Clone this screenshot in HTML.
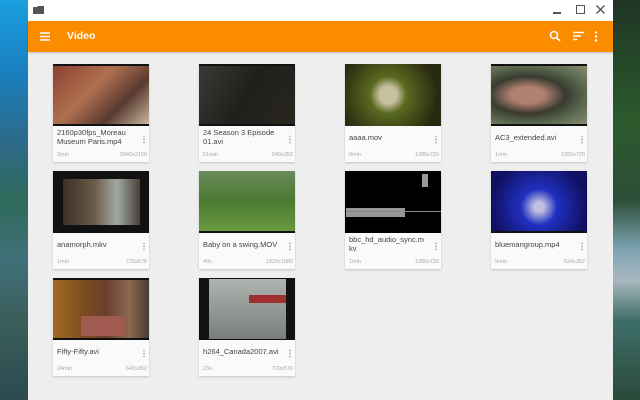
<!DOCTYPE html>
<html><head><meta charset="utf-8"><style>
*{margin:0;padding:0;box-sizing:border-box}
body{width:640px;height:400px;overflow:hidden;position:relative;font-family:"Liberation Sans",sans-serif;background:#1b3a2a}
.ldesk{position:absolute;left:0;top:0;width:28px;height:400px;background:linear-gradient(180deg,#1aa0e0 0%,#1a7fc0 18%,#2d6a8a 35%,#2f6a5a 50%,#40707a 65%,#3a5f5a 80%,#2c4a50 100%)}
.rdesk{position:absolute;left:613px;top:0;width:27px;height:400px;background:linear-gradient(180deg,#1f3524 0%,#2b5a2c 30%,#2c4f38 50%,#7aa0b0 62%,#a9b8c0 70%,#3f6f6a 80%,#2a4a3a 100%)}
.win{position:absolute;left:28px;top:0;width:585px;height:400px;background:#eeeeee}
.tb{height:21px;background:#fff;position:relative}
.bar{height:31px;background:#fb8c00;position:relative;color:#fff;box-shadow:0 1px 2px rgba(0,0,0,.2)}
.title{position:absolute;left:39px;top:9px;font-size:10.5px;font-weight:bold}
.card{position:absolute;width:96px;height:98px;background:#fafafa;box-shadow:0 1px 2px rgba(0,0,0,.18)}
.th{height:62px;background:#111;position:relative;overflow:hidden}
.nm{position:absolute;left:4px;top:65px;width:80px;font-size:7.5px;color:#444;line-height:8.5px}
.nm.one{top:70px}
.dots{position:absolute;right:4px;top:71px;width:2px;height:9px;background:radial-gradient(circle,#bbb 0.9px,transparent 1px) 0 0/2px 3px}
.m{position:absolute;top:88px;font-size:5.5px;color:#aaa}
.m.l{left:4px}.m.r{right:2px}
</style></head><body>
<div class="ldesk"></div><div class="rdesk"></div>
<div class="win">
<div class="tb">
<svg style="position:absolute;left:5px;top:5px" width="12" height="10"><path d="M0 2H4L5 1H11V9H0Z" fill="#555"/></svg>
<div style="position:absolute;left:525px;top:12px;width:8px;height:1.5px;background:#555"></div>
<div style="position:absolute;left:548px;top:5px;width:9px;height:9px;border:1.4px solid #555"></div>
<svg style="position:absolute;left:568px;top:5px" width="9" height="9"><path d="M0.5 0.5L8.5 8.5M8.5 0.5L0.5 8.5" stroke="#555" stroke-width="1.4"/></svg>
</div>
<div class="bar">
<svg style="position:absolute;left:12px;top:11px" width="10" height="9"><path d="M0 1H10M0 4.5H10M0 8H10" stroke="#fff" stroke-width="1.5"/></svg>
<div class="title">Video</div>
<svg style="position:absolute;left:521px;top:9px" width="12" height="12"><circle cx="5" cy="5" r="3.5" stroke="#fff" stroke-width="1.6" fill="none"/><path d="M7.5 7.5L11 11" stroke="#fff" stroke-width="1.8"/></svg>
<svg style="position:absolute;left:545px;top:10px" width="12" height="10"><path d="M0 1.5H11M0 5H8M0 8.5H4" stroke="#fff" stroke-width="1.5"/></svg>
<svg style="position:absolute;left:566px;top:10px" width="4" height="11"><circle cx="2" cy="1.5" r="1.2" fill="#fff"/><circle cx="2" cy="5.5" r="1.2" fill="#fff"/><circle cx="2" cy="9.5" r="1.2" fill="#fff"/></svg>
</div>
</div>

<div class="card" style="left:53px;top:64px"><div class="th" style="background:#111"><div style="position:absolute;left:0;top:2px;right:0;bottom:2px;background:linear-gradient(135deg,#8a4030,#b07050 40%,#5a3a30 70%,#c8b8a0)"></div></div><div class="nm">2160p30fps_Moreau Museum Paris.mp4</div><div class="dots"></div><div class="m l">3min</div><div class="m r">3840x2160</div></div>
<div class="card" style="left:199px;top:64px"><div class="th"><div style="position:absolute;left:0;top:2px;right:0;bottom:2px;background:linear-gradient(120deg,#3a3a36,#1f1f1c 50%,#2a2620)"></div></div><div class="nm">24 Season 3 Episode 01.avi</div><div class="dots"></div><div class="m l">51min</div><div class="m r">640x352</div></div>
<div class="card" style="left:345px;top:64px"><div class="th"><div style="position:absolute;left:0;top:0;right:0;bottom:0;background:radial-gradient(circle at 45% 50%,#c8c0a0 0 14%,#5a6a20 30%,#2a2a10 80%)"></div></div><div class="nm one">aaaa.mov</div><div class="dots"></div><div class="m l">9min</div><div class="m r">1280x720</div></div>
<div class="card" style="left:491px;top:64px"><div class="th"><div style="position:absolute;left:0;top:2px;right:0;bottom:2px;background:radial-gradient(ellipse at 38% 50%,#b08070 0 20%,#3a3a30 45%,#5a6a50 70%,#8a8a70)"></div></div><div class="nm one">AC3_extended.avi</div><div class="dots"></div><div class="m l">1min</div><div class="m r">1280x720</div></div>

<div class="card" style="left:53px;top:171px"><div class="th"><div style="position:absolute;left:10px;top:8px;width:77px;height:46px;background:linear-gradient(90deg,#3a3028,#6a5a48 40%,#a0a8a0 70%,#4a4038)"></div></div><div class="nm one">anamorph.mkv</div><div class="dots"></div><div class="m l">1min</div><div class="m r">720x576</div></div>
<div class="card" style="left:199px;top:171px"><div class="th"><div style="position:absolute;left:0;top:0;right:0;bottom:2px;background:linear-gradient(180deg,#6a8a5a,#4a7a30 50%,#6a9a40)"></div></div><div class="nm one">Baby on a swing.MOV</div><div class="dots"></div><div class="m l">40s</div><div class="m r">1920x1080</div></div>
<div class="card" style="left:345px;top:171px"><div class="th" style="background:#000"><div style="position:absolute;left:1px;top:37px;width:59px;height:9px;background:#999"></div><div style="position:absolute;left:1px;top:40px;right:0;height:1px;background:#888"></div><div style="position:absolute;left:77px;top:3px;width:6px;height:13px;background:#999"></div></div><div class="nm">bbc_hd_audio_sync.m kv</div><div class="dots"></div><div class="m l">1min</div><div class="m r">1280x720</div></div>
<div class="card" style="left:491px;top:171px"><div class="th"><div style="position:absolute;left:0;top:0;right:0;bottom:2px;background:radial-gradient(circle at 50% 60%,#c0c0e0 0 8%,#2030c0 30%,#101060 80%)"></div></div><div class="nm one">bluemangroup.mp4</div><div class="dots"></div><div class="m l">5min</div><div class="m r">624x352</div></div>

<div class="card" style="left:53px;top:278px"><div class="th"><div style="position:absolute;left:0;top:2px;right:0;bottom:2px;background:linear-gradient(90deg,#a06a20,#7a4a20 35%,#6a4030 55%,#8a6a50 80%,#4a3a30)"></div><div style="position:absolute;left:28px;top:38px;width:44px;height:20px;background:#a05a50"></div></div><div class="nm one">Fifty-Fifty.avi</div><div class="dots"></div><div class="m l">24min</div><div class="m r">640x352</div></div>
<div class="card" style="left:199px;top:278px"><div class="th"><div style="position:absolute;left:10px;top:1px;width:77px;height:60px;background:linear-gradient(180deg,#b0b4b0,#9a9e9a 40%,#7a7e7a)"></div><div style="position:absolute;left:50px;top:17px;width:37px;height:8px;background:#a03030"></div></div><div class="nm one">h264_Canada2007.avi</div><div class="dots"></div><div class="m l">23s</div><div class="m r">720x576</div></div>
</body></html>
